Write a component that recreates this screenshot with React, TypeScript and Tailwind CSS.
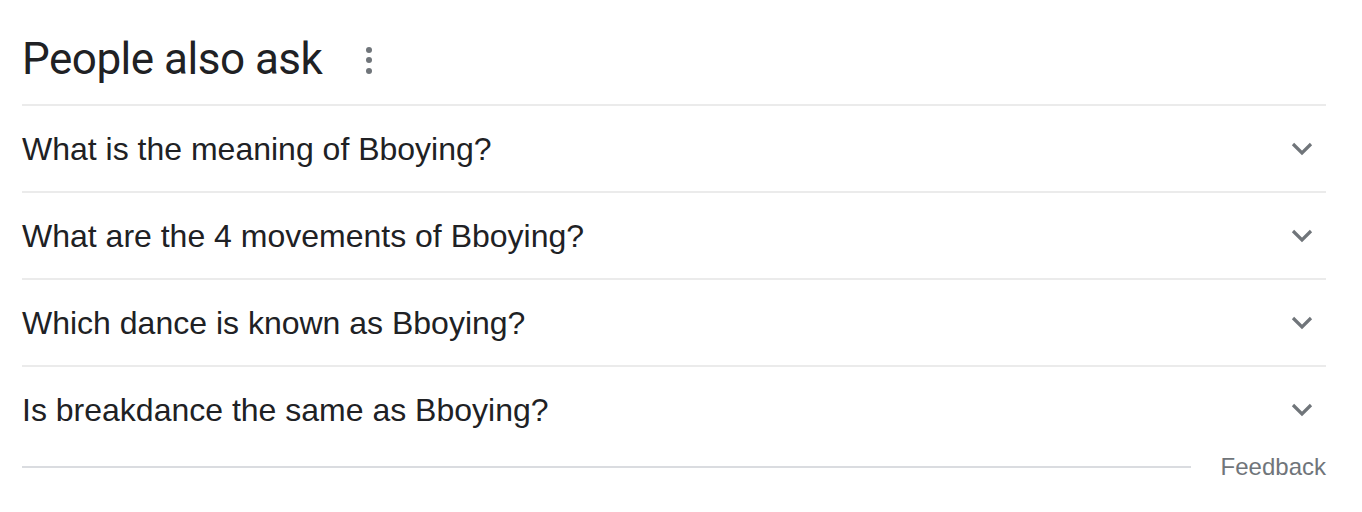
import React from "react";

const questions = [
  "What is the meaning of Bboying?",
  "What are the 4 movements of Bboying?",
  "Which dance is known as Bboying?",
  "Is breakdance the same as Bboying?",
];

function Chevron() {
  return (
    <svg width="24" height="16" viewBox="0 0 24 16" className="shrink-0">
      <path d="M3 3 L12 12 L21 3" fill="none" stroke="#70757a" strokeWidth="3.2" />
    </svg>
  );
}

export default function App() {
  return (
    <div className="w-[1362px] h-[512px] bg-white overflow-hidden">
      <div className="ml-[22px] w-[1304px]">
        {/* header */}
        <div className="h-[104px] flex items-center pt-[14px]">
          <h2 className="text-[44px] leading-none text-[#202124] font-['Roboto',sans-serif] tracking-[-0.5px]">
            People also ask
          </h2>
          <div className="ml-[44px] flex flex-col gap-[4.5px] pt-[2px]">
            <span className="w-[6px] h-[6px] rounded-full bg-[#70757a]" />
            <span className="w-[6px] h-[6px] rounded-full bg-[#70757a]" />
            <span className="w-[6px] h-[6px] rounded-full bg-[#70757a]" />
          </div>
        </div>

        {/* questions */}
        {questions.map((q) => (
          <div
            key={q}
            className="border-t-2 border-[#ebebeb] h-[87px] flex items-center justify-between pr-[12px]"
          >
            <span className="text-[32px] text-[#202124] font-['Liberation_Sans',Arial,sans-serif]">
              {q}
            </span>
            <Chevron />
          </div>
        ))}

        {/* footer */}
        <div className="flex items-center h-[30px]">
          <div className="flex-1 h-[2px] bg-[#dadce0]" />
          <span className="ml-[30px] text-[24px] text-[#70757a] font-['Liberation_Sans',Arial,sans-serif]">
            Feedback
          </span>
        </div>
      </div>
    </div>
  );
}
